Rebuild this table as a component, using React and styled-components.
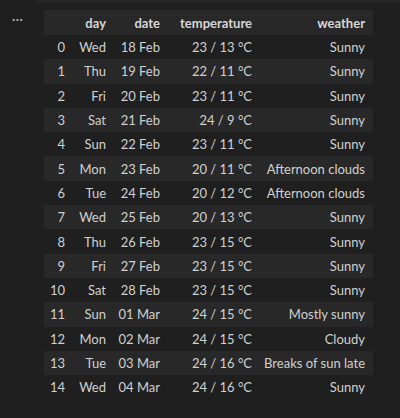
import styled, { createGlobalStyle } from "styled-components"

const GlobalStyle = createGlobalStyle`
    html, body {
        margin: 0;
        padding: 0;
        background-color: #1f1f1f;
    }
`

const Page = styled.div`
    width: 400px;
    height: 418px;
    background-color: #1f1f1f;
    color: #cccccc;
    font-family: Lato, "Open Sans", sans-serif;
    font-size: 13px;
    overflow: hidden;
`

const TopEdge = styled.div`
    height: 2px;
    margin-left: 36px;
    background-color: #262626;
`

const Cell = styled.div`
    display: flex;
    padding-top: 8px;
`

const Gutter = styled.div`
    width: 44px;
    display: flex;
    justify-content: flex-start;
    padding: 5px 0 0 12px;
    box-sizing: border-box;
`

const Dots = styled.span`
    color: #aaaaaa;
    font-size: 12px;
    letter-spacing: 0.5px;
    line-height: 8px;
    font-weight: 700;
`

const Table = styled.table`
    border-collapse: collapse;
    table-layout: fixed;
    width: 329px;
`

const Row = styled.tr`
    background-color: ${(props) => (props.striped ? "#282828" : "transparent")};
    height: ${(props) => (props.header ? "25px" : "24.3px")};
`

const Th = styled.th`
    text-align: right;
    padding: 0 8px 0 0;
    font-weight: 700;
    color: #d6d6d6;
    white-space: nowrap;
`

const Td = styled.td`
    text-align: right;
    padding: 0 8px 0 0;
    white-space: nowrap;
    color: #d0d0d0;
`

const rows = [
    ["Wed", "18 Feb", "23 / 13 °C", "Sunny"],
    ["Thu", "19 Feb", "22 / 11 °C", "Sunny"],
    ["Fri", "20 Feb", "23 / 11 °C", "Sunny"],
    ["Sat", "21 Feb", "24 / 9 °C", "Sunny"],
    ["Sun", "22 Feb", "23 / 11 °C", "Sunny"],
    ["Mon", "23 Feb", "20 / 11 °C", "Afternoon clouds"],
    ["Tue", "24 Feb", "20 / 12 °C", "Afternoon clouds"],
    ["Wed", "25 Feb", "20 / 13 °C", "Sunny"],
    ["Thu", "26 Feb", "23 / 15 °C", "Sunny"],
    ["Fri", "27 Feb", "23 / 15 °C", "Sunny"],
    ["Sat", "28 Feb", "23 / 15 °C", "Sunny"],
    ["Sun", "01 Mar", "24 / 15 °C", "Mostly sunny"],
    ["Mon", "02 Mar", "24 / 15 °C", "Cloudy"],
    ["Tue", "03 Mar", "24 / 16 °C", "Breaks of sun late"],
    ["Wed", "04 Mar", "24 / 16 °C", "Sunny"],
]

const App = () => {
    return (
        <Page>
            <GlobalStyle />
            <TopEdge />
            <Cell>
                <Gutter>
                    <Dots>···</Dots>
                </Gutter>
                <Table>
                    <colgroup>
                        <col style={{ width: 29 }} />
                        <col style={{ width: 41 }} />
                        <col style={{ width: 54 }} />
                        <col style={{ width: 92 }} />
                        <col style={{ width: 113 }} />
                    </colgroup>
                    <thead>
                        <Row header striped>
                            <Th></Th>
                            <Th>day</Th>
                            <Th>date</Th>
                            <Th>temperature</Th>
                            <Th>weather</Th>
                        </Row>
                    </thead>
                    <tbody>
                        {rows.map((r, i) => (
                            <Row key={i} striped={i % 2 === 1}>
                                <Td>{i}</Td>
                                <Td>{r[0]}</Td>
                                <Td>{r[1]}</Td>
                                <Td>{r[2]}</Td>
                                <Td>{r[3]}</Td>
                            </Row>
                        ))}
                    </tbody>
                </Table>
            </Cell>
        </Page>
    )
}

export default App
